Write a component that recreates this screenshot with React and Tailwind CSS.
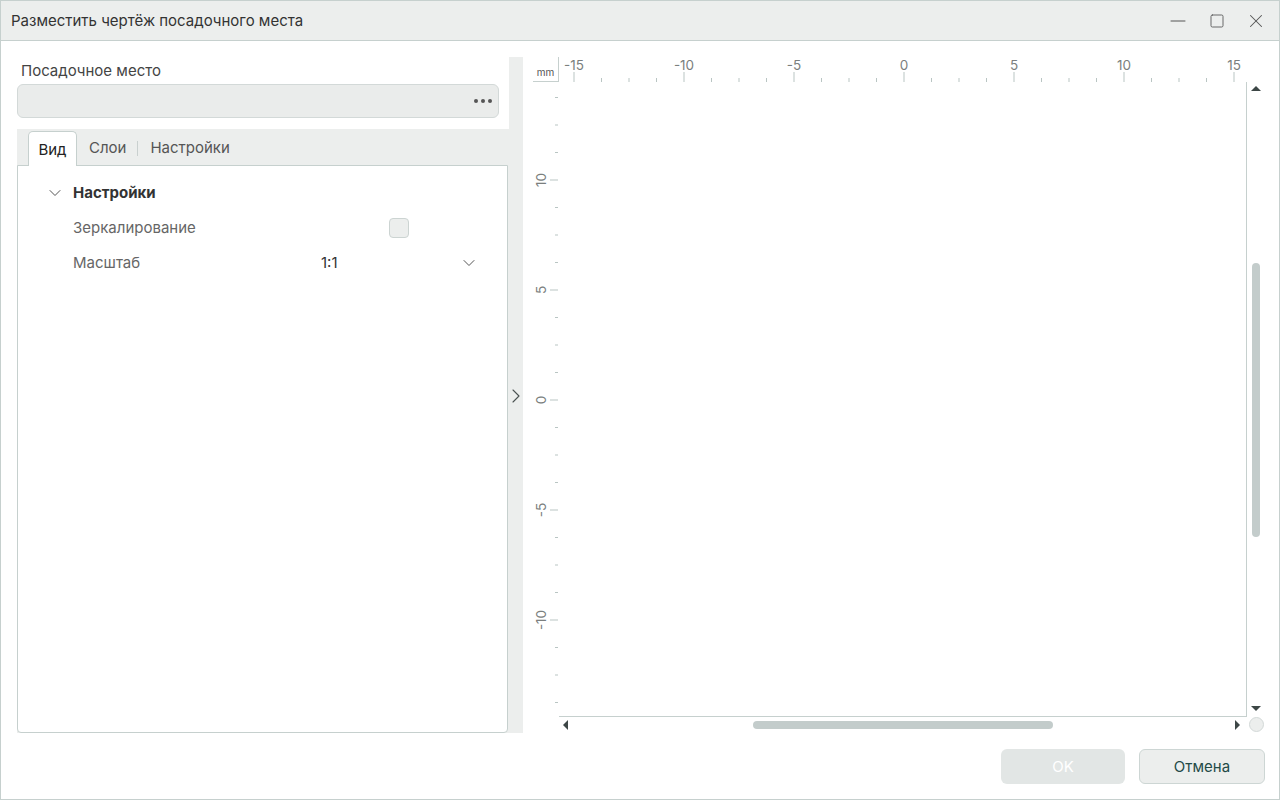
import React from 'react';
import { ChevronDown, ChevronRight, Minus, Square, X } from 'lucide-react';

const font = { fontFamily: 'Inter, "Noto Sans", sans-serif' };

function TopRuler() {
  const ticks = [];
  for (let j = 0; j <= 24; j++) {
    const x = 15 + j * 27.5;
    const major = j % 4 === 0;
    ticks.push(<line key={j} x1={x} x2={x} y1={major ? 15 : 21} y2={25} stroke="#b9c5c3" strokeWidth="1" />);
  }
  const labels = [-15, -10, -5, 0, 5, 10, 15];
  return (
    <svg width="688" height="25" className="block">
      {ticks}
      {labels.map((v, i) => (
        <text key={v} x={15 + i * 110} y={13} textAnchor="middle" fontSize="13.5" fill="#7b7f7e" style={font}>
          {v}
        </text>
      ))}
    </svg>
  );
}

function LeftRuler() {
  const ticks = [];
  for (let j = -3; j <= 19; j++) {
    const y = 98 + j * 27.5;
    const major = j % 4 === 0;
    ticks.push(<line key={j} y1={y} y2={y} x1={major ? 17 : 22} x2={25} stroke="#b9c5c3" strokeWidth="1" />);
  }
  const labels = [10, 5, 0, -5, -10];
  return (
    <svg width="26" height="635" className="block">
      {ticks}
      {labels.map((v, i) => (
        <text
          key={v}
          x={0}
          y={0}
          transform={`translate(13 ${98 + i * 110}) rotate(-90)`}
          textAnchor="middle"
          fontSize="13.5"
          fill="#7b7f7e"
          style={font}
        >
          {v}
        </text>
      ))}
    </svg>
  );
}

function Tri({ dir }) {
  const pts = {
    up: '0,5 5,0 10,5',
    down: '0,0 10,0 5,5',
    left: '5,0 5,10 0,5',
    right: '0,0 0,10 5,5',
  }[dir];
  const vertical = dir === 'up' || dir === 'down';
  return (
    <svg width={vertical ? 10 : 5} height={vertical ? 5 : 10} className="block">
      <polygon points={pts} fill="#3d4746" />
    </svg>
  );
}

export default function App() {
  return (
    <div className="w-[1280px] h-[800px] bg-white border border-[#c6d0ce] flex flex-col overflow-hidden text-[#333]" style={font}>
      {/* Title bar */}
      <div className="h-[40px] shrink-0 bg-[#eceeed] border-b border-[#c6d0ce] flex items-center pl-[10px]">
        <span className="text-[15px] text-[#333] pt-[2px]">Разместить чертёж посадочного места</span>
        <div className="ml-auto flex items-center text-[#555]">
          <div className="w-[39px] flex justify-center"><Minus size={24} strokeWidth={1} /></div>
          <div className="w-[39px] flex justify-center"><Square size={16} strokeWidth={1.3} /></div>
          <div className="w-[39px] flex justify-center mr-[4px]"><X size={22} strokeWidth={1.1} /></div>
        </div>
      </div>

      {/* Body */}
      <div className="flex pt-[16px] pl-[16px] h-[692px]">
        {/* Left panel */}
        <div className="w-[492px] flex flex-col">
          <div className="text-[15px] text-[#444] pl-[4px] pt-[2px] h-[27px] flex items-center">Посадочное место</div>
          <div className="h-[34px] mr-[10px] rounded-[6px] bg-[#eaeceb] border border-[#d3d9d8] flex items-center justify-end pr-[6px]">
            <div className="flex gap-[3px]">
              <span className="w-[4px] h-[4px] rounded-full bg-[#555]" />
              <span className="w-[4px] h-[4px] rounded-full bg-[#555]" />
              <span className="w-[4px] h-[4px] rounded-full bg-[#555]" />
            </div>
          </div>
          <div className="h-[11px]" />
          <div className="flex-1 flex flex-col bg-[#eceeed]">
            <div className="h-[36px] flex items-end pl-[11px] text-[15px]">
              <div className="h-[35px] w-[49px] pt-[2px] bg-white border border-b-0 border-[#c6d0ce] rounded-t-[5px] flex items-center justify-center text-[#222] relative z-10 -mb-px">
                Вид
              </div>
              <div className="h-[35px] pt-[2px] flex items-center text-[#555] pl-[12px]">
                Слои
                <span className="ml-[11px] mr-[12px] w-px h-[15px] bg-[#c9d0cf]" />
                Настройки
              </div>
            </div>
            <div className="flex-1 bg-white border border-[#c6d0ce] rounded-b-[4px] mr-px">
              <div className="pt-[15px]">
                <div className="h-[24px] flex items-center pl-[27px]">
                  <ChevronDown size={20} strokeWidth={1.2} className="text-[#555]" />
                  <span className="ml-[8px] text-[15px] font-bold text-[#333]">Настройки</span>
                </div>
                <div className="h-[35px] flex items-center pl-[55px] pt-[11px]">
                  <span className="text-[15px] text-[#666] w-[316px]">Зеркалирование</span>
                  <span className="w-[20px] h-[20px] rounded-[4px] bg-[#eceeed] border border-[#ccd4d2]" />
                </div>
                <div className="h-[35px] flex items-center pl-[55px] pt-[11px]">
                  <span className="text-[15px] text-[#666] w-[248px]">Масштаб</span>
                  <span className="text-[15px] text-[#333] w-[138px]">1:1</span>
                  <ChevronDown size={20} strokeWidth={1.2} className="text-[#555]" />
                </div>
              </div>
            </div>
          </div>
        </div>

        {/* Splitter */}
        <div className="w-[14px] bg-[#eceeed] flex items-center justify-center">
          <ChevronRight size={24} strokeWidth={1.1} className="text-[#4a5251] mt-[2px] shrink-0" />
        </div>

        {/* Right panel */}
        <div className="w-[756px] pl-[10px] flex flex-col">
          <div className="flex h-[25px]">
            <div className="w-[26px] h-[25px] border-b border-r border-[#c6d0ce] flex items-end justify-center pb-[4px] text-[10px] text-[#555] leading-none">mm</div>
            <TopRuler />
          </div>
          <div className="flex h-[635px]">
            <LeftRuler />
            <div className="w-[688px] h-[635px] border-r border-b border-[#c6d0ce] bg-white" />
            <div className="w-[18px] flex flex-col items-center pt-[4px] pb-[6px]">
              <Tri dir="up" />
              <div className="flex-1 w-full flex flex-col items-center pt-[172px]">
                <div className="w-[8px] h-[274px] rounded-full bg-[#c3cccb]" />
              </div>
              <Tri dir="down" />
            </div>
          </div>
          <div className="flex h-[15px] items-center">
            <div className="w-[26px]" />
            <div className="w-[688px] flex items-center pl-[4px] pr-[7px]">
              <Tri dir="left" />
              <div className="flex-1 flex pl-[185px]">
                <div className="w-[300px] h-[8px] rounded-full bg-[#c3cccb]" />
              </div>
              <Tri dir="right" />
            </div>
            <div className="w-[18px] flex justify-center">
              <span className="w-[15px] h-[15px] rounded-full bg-[#eceeed] border border-[#d3d9d8]" />
            </div>
          </div>
        </div>
      </div>

      {/* Footer */}
      <div className="flex justify-end items-start pt-[16px] pr-[14px] gap-[14px]">
        <button className="w-[124px] h-[35px] pt-[1px] rounded-[6px] bg-[#e2e6e5] text-[15px] text-white">OK</button>
        <button className="w-[126px] h-[35px] pt-[1px] rounded-[6px] bg-[#eceeed] border border-[#cdd6d4] text-[15px] text-[#234a47]">Отмена</button>
      </div>
    </div>
  );
}
